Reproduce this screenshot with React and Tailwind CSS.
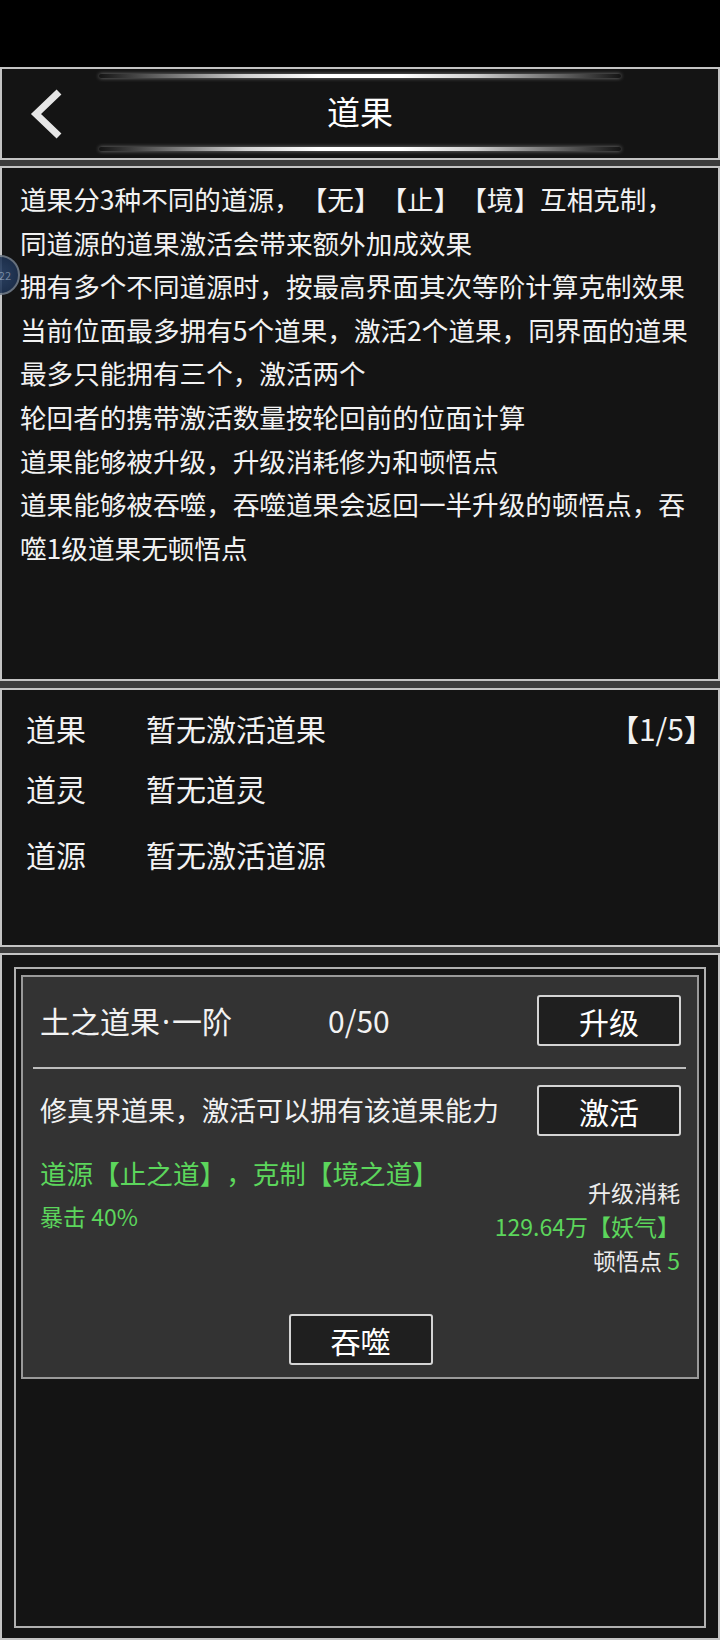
import React from "react";

const rules = [
  "道果分3种不同的道源，【无】【止】【境】互相克制，",
  "同道源的道果激活会带来额外加成效果",
  "拥有多个不同道源时，按最高界面其次等阶计算克制效果",
  "当前位面最多拥有5个道果，激活2个道果，同界面的道果最多只能拥有三个，激活两个",
  "轮回者的携带激活数量按轮回前的位面计算",
  "道果能够被升级，升级消耗修为和顿悟点",
  "道果能够被吞噬，吞噬道果会返回一半升级的顿悟点，吞噬1级道果无顿悟点",
];

const status = [
  { label: "道果", value: "暂无激活道果", count: "【1/5】", h: "h-[60px]" },
  { label: "道灵", value: "暂无道灵", h: "h-[60px]" },
  { label: "道源", value: "暂无激活道源", h: "h-[72px]" },
];

function GlowLine({ className = "" }) {
  return (
    <div
      className={`mx-auto w-[522px] h-[4px] rounded-full bg-[linear-gradient(90deg,transparent_0%,#5a5a5a_10%,#d0d0d0_28%,#ffffff_42%,#ffffff_58%,#d0d0d0_72%,#5a5a5a_90%,transparent_100%)] shadow-[0_0_4px_rgba(255,255,255,0.45)] ${className}`}
    />
  );
}

function GameButton({ children }) {
  return (
    <button className="w-[144px] h-[51px] shrink-0 flex items-center justify-center rounded-[3px] border-2 border-[#d4d4d4] bg-[#1f1f1f] text-[30px] leading-none text-white">
      {children}
    </button>
  );
}

export default function App() {
  return (
    <div className="relative h-[1640px] overflow-hidden flex flex-col bg-[#3c3c3c] font-['Noto_Sans_CJK_SC','Noto_Sans',sans-serif] text-[#f2f2f2] [text-spacing-trim:space-all]">
      {/* 顶部黑条 */}
      <div className="h-[67px] shrink-0 bg-black" />

      {/* 标题栏 */}
      <div className="h-[93px] shrink-0 border-2 border-[#c4c4c4] bg-[#141414] flex flex-col">
        <GlowLine className="mt-[5px]" />
        <div className="mt-[3px] h-[60px] grid grid-cols-[1fr_auto_1fr] items-center">
          <div className="pl-[26px] flex items-center">
            <svg width="40" height="56" viewBox="0 0 40 56" className="mt-[2px]">
              <polyline
                points="31,8 8,30 31,52"
                fill="none"
                stroke="#e6e6e6"
                strokeWidth="7"
                strokeLinejoin="miter"
              />
            </svg>
          </div>
          <h1 className="text-[33px] leading-[60px] text-white">道果</h1>
          <div />
        </div>
        <GlowLine className="mt-[6px]" />
      </div>

      {/* 规则说明 */}
      <div className="mt-[6px] h-[515px] shrink-0 border-2 border-[#c4c4c4] bg-[#141414] pt-[9px] pl-[18px] pr-[20px] text-[26.6px] leading-[43.6px]">
        {rules.map((line, i) => (
          <p key={i}>{line}</p>
        ))}
      </div>

      {/* 当前状态 */}
      <div className="mt-[7px] h-[259px] shrink-0 border-2 border-[#c4c4c4] bg-[#141414] pt-[8px] pl-[24px] pr-[4px] text-[30px]">
        {status.map((row) => (
          <div key={row.label} className={`${row.h} flex items-center`}>
            <span className="w-[120px] shrink-0">{row.label}</span>
            <span>{row.value}</span>
            {row.count && <span className="ml-auto">{row.count}</span>}
          </div>
        ))}
      </div>

      {/* 道果列表 */}
      <div className="mt-[6px] flex-1 flex flex-col border-2 border-[#c4c4c4] bg-[#141414]">
        <div className="mt-[12px] mx-[12px] mb-[10px] flex-1 border-2 border-[#b0b0b0]">
          <div className="mt-[6px] mx-[5px] border-2 border-[#9a9a9a] bg-[#333333] pt-[18px] pb-[12px] pl-[17px] pr-[16px]">
            <div className="h-[51px] flex items-center">
              <span className="w-[288px] shrink-0 text-[30px]">
                土之道果<span className="font-['Noto_Sans',sans-serif] px-[2px]">·</span>一阶
              </span>
              <span className="text-[30px]">0/50</span>
              <div className="ml-auto">
                <GameButton>升级</GameButton>
              </div>
            </div>

            <div className="mt-[21px] -ml-[7px] mr-[-5px] h-[2px] bg-[#bdbdbd]" />

            <div className="mt-[16px] h-[51px] flex items-center">
              <span className="text-[27px]">修真界道果，激活可以拥有该道果能力</span>
              <div className="ml-auto">
                <GameButton>激活</GameButton>
              </div>
            </div>

            <div className="mt-[19px] flex justify-between items-start">
              <div className="text-[#5cd65c]">
                <p className="text-[26.6px] leading-[36px]">道源【止之道】，克制【境之道】</p>
                <p className="text-[23px] leading-[50px]">暴击 40%</p>
              </div>
              <div className="pt-[20px] pr-[1px] text-right text-[23px] leading-[34px] text-[#ececec]">
                <p>升级消耗</p>
                <p className="text-[#5cd65c]">129.64万【妖气】</p>
                <p>
                  顿悟点 <span className="text-[#5cd65c]">5</span>
                </p>
              </div>
            </div>

            <div className="mt-[37px] flex justify-center">
              <GameButton>吞噬</GameButton>
            </div>
          </div>
        </div>
      </div>

      {/* 悬浮录屏小球 */}
      <div className="absolute -left-[20px] top-[255px] w-[40px] h-[40px] rounded-full border-2 border-[#6f7a88] bg-[radial-gradient(circle,#2c4468_0%,#1f3352_70%)] flex items-center justify-end pr-[7px] text-[11px] leading-none text-[#7f92ad] opacity-90">
        22
      </div>
    </div>
  );
}
